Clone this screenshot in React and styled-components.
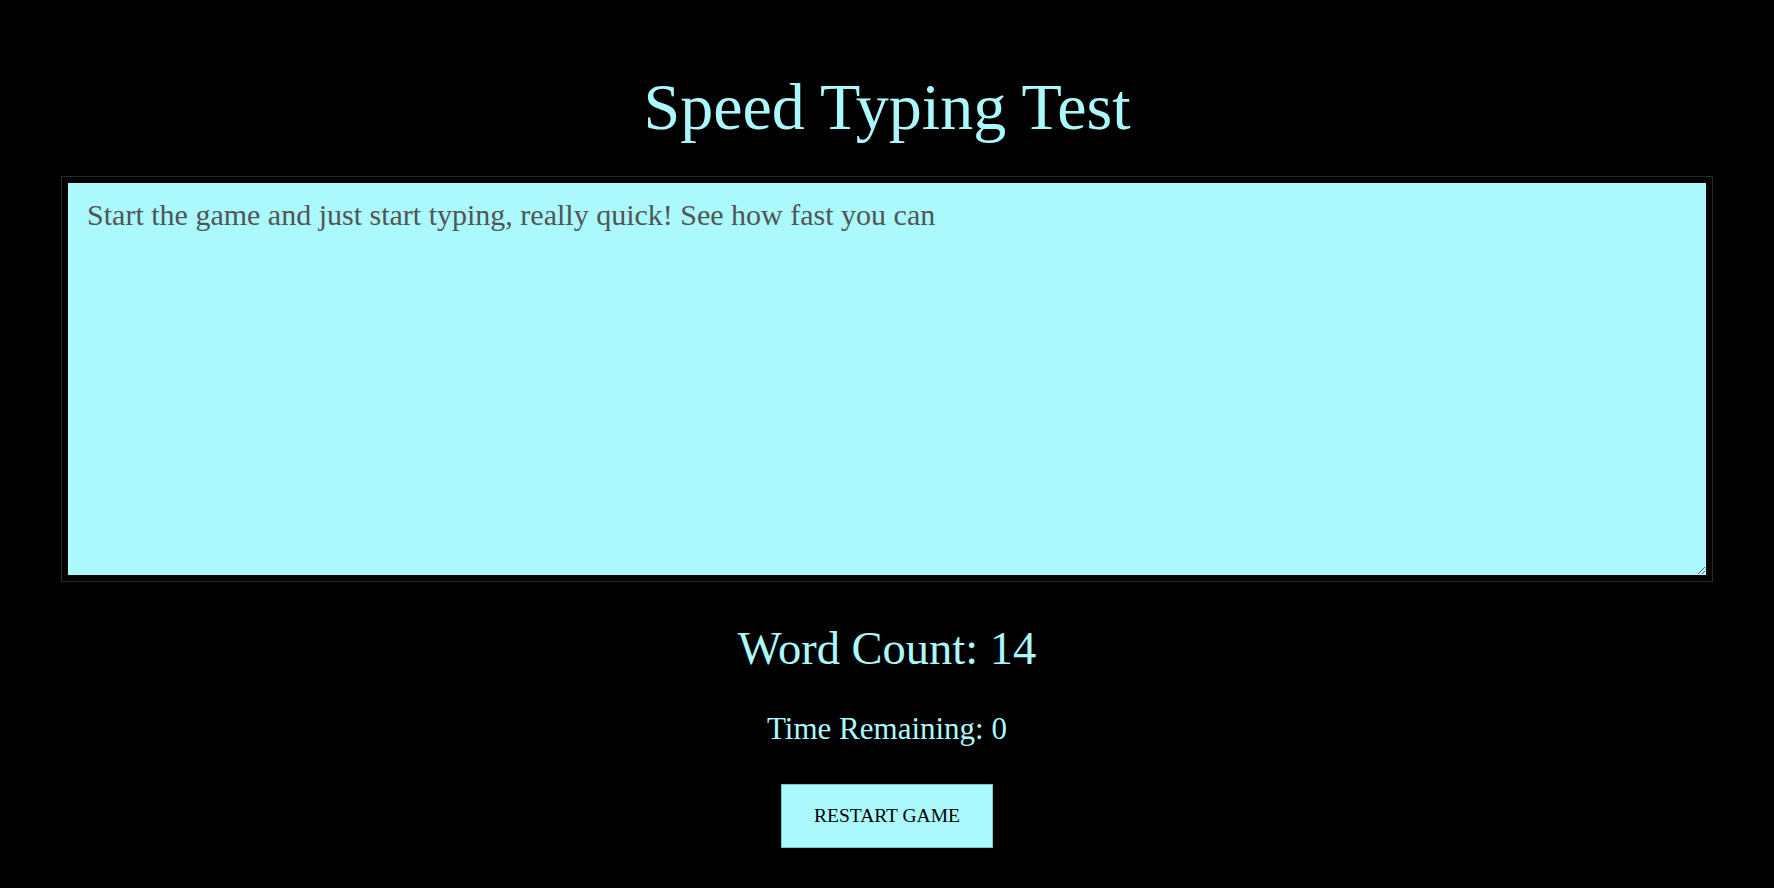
import React from "react";
import styled, { createGlobalStyle } from "styled-components";

const GlobalStyle = createGlobalStyle`
  html, body {
    margin: 0;
    padding: 0;
    background: #000;
  }
  body {
    font-family: "Liberation Serif", "Times New Roman", serif;
  }
`;

const Page = styled.main`
  display: flex;
  flex-direction: column;
  align-items: center;
  min-height: 100vh;
  background: #000;
`;

const Title = styled.h1`
  margin: 69px 0 0;
  font-family: "Liberation Serif", serif;
  font-weight: normal;
  font-size: 66px;
  line-height: 1.15;
  color: #abf9fc;
`;

const TypingArea = styled.textarea`
  box-sizing: border-box;
  width: 93%;
  height: 404px;
  margin-top: 32px;
  padding: 15px 19px;
  border: 6px solid #000;
  box-shadow: 0 0 0 1px #1f2e2e;
  background: #abf9fc;
  color: #505656;
  font-family: "Liberation Serif", serif;
  font-size: 30px;
  line-height: 1.15;
  resize: both;
  outline: none;
`;

const Stat = styled.h2`
  margin: ${(p) => p.$top}px 0 0;
  font-family: "Liberation Serif", serif;
  font-weight: normal;
  font-size: ${(p) => p.$size}px;
  line-height: 1.15;
  color: #abf9fc;
`;

const RestartButton = styled.button`
  margin-top: 37px;
  height: 64px;
  padding: 0 32px;
  background: #abf9fc;
  border: 1px solid #6fc9cc;
  color: #000;
  font-family: "Liberation Serif", serif;
  font-size: 19.5px;
  cursor: pointer;
`;

export default function App() {
  return (
    <>
      <GlobalStyle />
      <Page>
        <Title>Speed Typing Test</Title>
        <TypingArea
          defaultValue="Start the game and just start typing, really quick! See how fast you can"
          spellCheck={false}
        />
        <Stat $size={46.5} $top={41}>Word Count: 14</Stat>
        <Stat $size={31} $top={36}>Time Remaining: 0</Stat>
        <RestartButton>RESTART GAME</RestartButton>
      </Page>
    </>
  );
}
